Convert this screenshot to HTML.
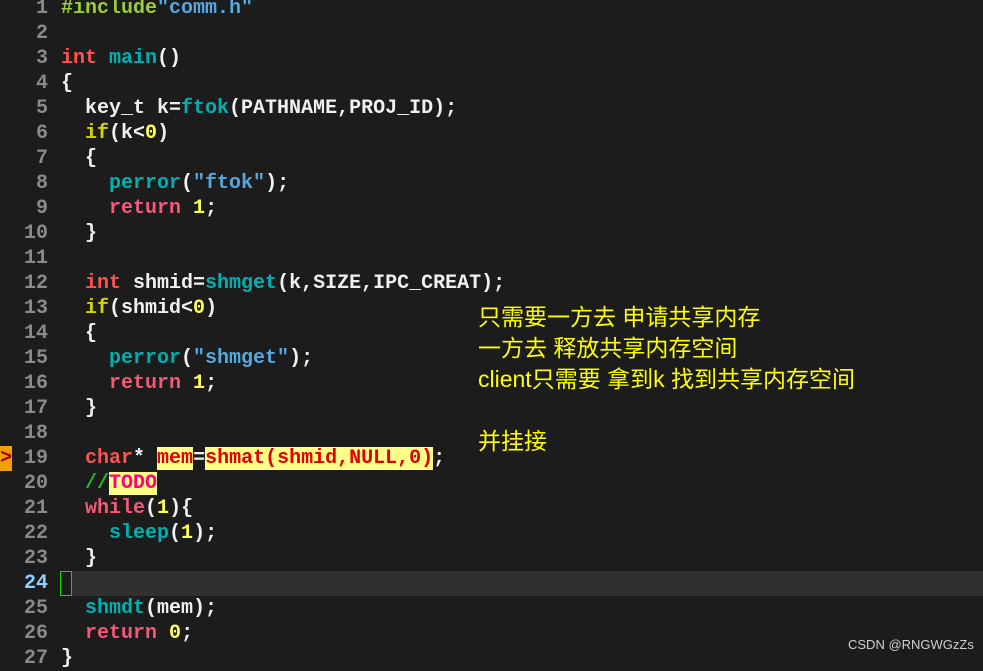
<!DOCTYPE html><html><head><meta charset="utf-8"><style>
body{margin:0;width:983px;height:661px;background:#1c1c1c;overflow:hidden;position:relative;font-family:"Liberation Mono","DejaVu Sans Mono",monospace;font-weight:bold;font-size:20px}
.l{position:absolute;left:0;height:25px;line-height:25px;width:983px;white-space:pre;color:#f0f0f0}
.n{position:absolute;left:0;width:48px;text-align:right;color:#8a8a8a}
.c{position:absolute;left:61px}
.k{color:#ff5252}.r{color:#f25a78}.i{color:#d4d400}.f{color:#00b0b0}.s{color:#55a8e0}.d{color:#ffff55}.g{color:#9ccc3c}
.h{background:#ffff88;color:#e00000}
.cn{position:absolute;left:478px;color:#ffff00;font-family:"Liberation Sans","Noto Sans CJK SC",sans-serif;font-weight:normal;font-size:23px;line-height:31px;white-space:pre}
</style></head><body>
<div class="l" style="top:-4px"><span class="n">1</span><span class="c"><span class="g">#include</span><span class="s">"comm.h"</span></span></div>
<div class="l" style="top:21px"><span class="n">2</span></div>
<div class="l" style="top:46px"><span class="n">3</span><span class="c"><span class="k">int</span> <span class="f">main</span>()</span></div>
<div class="l" style="top:71px"><span class="n">4</span><span class="c">{</span></div>
<div class="l" style="top:96px"><span class="n">5</span><span class="c">  key_t k=<span class="f">ftok</span>(PATHNAME,PROJ_ID);</span></div>
<div class="l" style="top:121px"><span class="n">6</span><span class="c">  <span class="i">if</span>(k&lt;<span class="d">0</span>)</span></div>
<div class="l" style="top:146px"><span class="n">7</span><span class="c">  {</span></div>
<div class="l" style="top:171px"><span class="n">8</span><span class="c">    <span class="f">perror</span>(<span class="s">"ftok"</span>);</span></div>
<div class="l" style="top:196px"><span class="n">9</span><span class="c">    <span class="r">return</span> <span class="d">1</span>;</span></div>
<div class="l" style="top:221px"><span class="n">10</span><span class="c">  }</span></div>
<div class="l" style="top:246px"><span class="n">11</span></div>
<div class="l" style="top:271px"><span class="n">12</span><span class="c">  <span class="k">int</span> shmid=<span class="f">shmget</span>(k,SIZE,IPC_CREAT);</span></div>
<div class="l" style="top:296px"><span class="n">13</span><span class="c">  <span class="i">if</span>(shmid&lt;<span class="d">0</span>)</span></div>
<div class="l" style="top:321px"><span class="n">14</span><span class="c">  {</span></div>
<div class="l" style="top:346px"><span class="n">15</span><span class="c">    <span class="f">perror</span>(<span class="s">"shmget"</span>);</span></div>
<div class="l" style="top:371px"><span class="n">16</span><span class="c">    <span class="r">return</span> <span class="d">1</span>;</span></div>
<div class="l" style="top:396px"><span class="n">17</span><span class="c">  }</span></div>
<div class="l" style="top:421px"><span class="n">18</span></div>
<div class="l" style="top:446px"><span style="position:absolute;left:0;width:12px;background:#f0a000;color:#a00000">&gt;</span><span class="n">19</span><span class="c">  <span class="k">char</span>* <span class="h">mem</span>=<span class="h">shmat(shmid,NULL,0)</span>;</span></div>
<div class="l" style="top:471px"><span class="n">20</span><span class="c">  <span style="color:#20c020">//</span><span style="background:#ffff88;color:#ff0080">TODO</span></span></div>
<div class="l" style="top:496px"><span class="n">21</span><span class="c">  <span class="r">while</span>(<span class="d">1</span>){</span></div>
<div class="l" style="top:521px"><span class="n">22</span><span class="c">    <span class="f">sleep</span>(<span class="d">1</span>);</span></div>
<div class="l" style="top:546px"><span class="n">23</span><span class="c">  }</span></div>
<div class="l" style="top:571px;background:linear-gradient(90deg,#1c1c1c 72px,#303030 72px)"><span class="n" style="color:#8fd0ff">24</span><span style="position:absolute;left:60px;top:0;width:10px;height:23px;border:1px solid #00e000"></span></div>
<div class="l" style="top:596px"><span class="n">25</span><span class="c">  <span class="f">shmdt</span>(mem);</span></div>
<div class="l" style="top:621px"><span class="n">26</span><span class="c">  <span class="r">return</span> <span class="d">0</span>;</span></div>
<div class="l" style="top:646px"><span class="n">27</span><span class="c">}</span></div>
<div class="cn" style="top:302px">只需要一方去 申请共享内存
一方去 释放共享内存空间
client只需要 拿到k 找到共享内存空间

并挂接</div>
<div style="position:absolute;left:848px;top:637px;font-family:'Liberation Sans',sans-serif;font-weight:normal;font-size:13px;color:#d0d0d0">CSDN @RNGWGzZs</div>
</body></html>
